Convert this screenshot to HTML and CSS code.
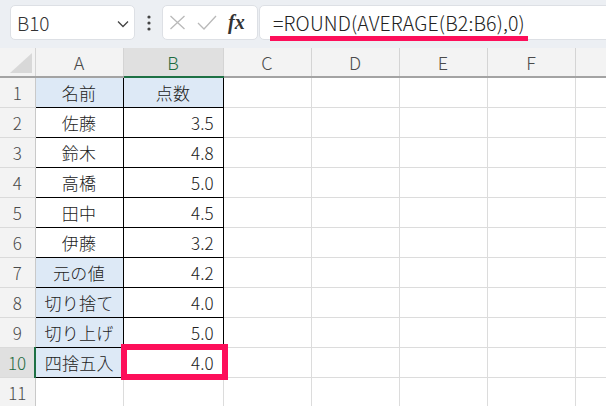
FILE: index.html
```html
<!DOCTYPE html>
<html lang="ja">
<head>
<meta charset="utf-8">
<title>ROUND</title>
<link rel="stylesheet" href="styles.css">
</head>
<body>
<div class="app">
  <div class="toolbar">
    <div class="namebox">
      <span class="name">B10</span>
      <svg class="chev" width="12" height="8" viewBox="0 0 12 8"><path d="M1 1.5 L6 6.5 L11 1.5" fill="none" stroke="#444" stroke-width="1.3"/></svg>
    </div>
    <div class="more">
      <svg width="4" height="16" viewBox="0 0 4 16"><circle cx="2" cy="2" r="1.6" fill="#444"/><circle cx="2" cy="8" r="1.6" fill="#444"/><circle cx="2" cy="14" r="1.6" fill="#444"/></svg>
    </div>
    <div class="fxbox">
      <svg class="ico" width="17" height="15" viewBox="0 0 17 15"><path d="M1.5 1 L15.5 14 M15.5 1 L1.5 14" fill="none" stroke="#b9b9b9" stroke-width="1.3"/></svg>
      <svg class="ico" width="20" height="15" viewBox="0 0 20 15"><path d="M1 8 L7 14 L19 1" fill="none" stroke="#b9b9b9" stroke-width="1.3"/></svg>
      <span class="fx">fx</span>
    </div>
    <div class="formula">
      <span class="ftext">=ROUND(AVERAGE(B2:B6),0)</span>
      <span class="mark"></span>
    </div>
  </div>
  <div class="sheet">
    <table class="grid">
      <colgroup>
        <col class="c-rh"><col class="c-a"><col class="c-b"><col class="c-n"><col class="c-n"><col class="c-n"><col class="c-n"><col class="c-g">
      </colgroup>
      <tr class="hdr">
        <th class="corner"><svg width="22" height="20" viewBox="0 0 22 20"><polygon points="22,0 22,20 0,20" fill="#d8d8d8"/></svg></th>
        <th class="col">A</th><th class="col sel">B</th><th class="col">C</th><th class="col">D</th><th class="col">E</th><th class="col">F</th><th class="col"></th>
      </tr>
      <tr><th class="row">1</th><td class="t blue ctr">名前</td><td class="t blue ctr">点数</td><td></td><td></td><td></td><td></td><td></td></tr>
      <tr><th class="row">2</th><td class="t ctr">佐藤</td><td class="t num">3.5</td><td></td><td></td><td></td><td></td><td></td></tr>
      <tr><th class="row">3</th><td class="t ctr">鈴木</td><td class="t num">4.8</td><td></td><td></td><td></td><td></td><td></td></tr>
      <tr><th class="row">4</th><td class="t ctr">高橋</td><td class="t num">5.0</td><td></td><td></td><td></td><td></td><td></td></tr>
      <tr><th class="row">5</th><td class="t ctr">田中</td><td class="t num">4.5</td><td></td><td></td><td></td><td></td><td></td></tr>
      <tr><th class="row">6</th><td class="t ctr">伊藤</td><td class="t num">3.2</td><td></td><td></td><td></td><td></td><td></td></tr>
      <tr><th class="row">7</th><td class="t blue ctr">元の値</td><td class="t num">4.2</td><td></td><td></td><td></td><td></td><td></td></tr>
      <tr><th class="row">8</th><td class="t blue ctr">切り捨て</td><td class="t num">4.0</td><td></td><td></td><td></td><td></td><td></td></tr>
      <tr><th class="row">9</th><td class="t blue ctr">切り上げ</td><td class="t num">5.0</td><td></td><td></td><td></td><td></td><td></td></tr>
      <tr><th class="row sel">10</th><td class="t blue ctr">四捨五入</td><td class="t num active">4.0<span class="box"></span></td><td></td><td></td><td></td><td></td><td></td></tr>
      <tr><th class="row">11</th><td></td><td></td><td></td><td></td><td></td><td></td><td></td></tr>
    </table>
  </div>
</div>
</body>
</html>
```

FILE: styles.css
```css
html, body {
  margin: 0;
  padding: 0;
  background: #ffffff;
}
body {
  font-family: "Noto Sans CJK JP", "Noto Sans", sans-serif;
  font-weight: 300;
  color: #222;
  width: 606px;
  height: 406px;
  overflow: hidden;
}
.app {
  width: 606px;
  height: 406px;
  overflow: hidden;
}
.toolbar {
  height: 48px;
  box-sizing: border-box;
  background: #eceff3;
  display: flex;
  align-items: flex-start;
  padding: 5px 0 0 10px;
}
.namebox, .fxbox, .formula {
  height: 35px;
  box-sizing: border-box;
  background: #fff;
  border: 1px solid #dde0e5;
  border-radius: 5px;
  display: flex;
  align-items: center;
}
.namebox {
  width: 125px;
  padding: 0 5px 0 6px;
  justify-content: space-between;
}
.name {
  font-size: 19px;
  color: #333;
}
.chev {
  margin-top: 2px;
}
.more {
  width: 27px;
  height: 35px;
  display: flex;
  align-items: center;
  justify-content: center;
}
.fxbox {
  width: 96px;
  padding: 0 0 0 6px;
}
.fxbox .ico:first-child {
  margin-right: 11px;
}
.fxbox .ico + .ico {
  margin-right: 11px;
}
.fx {
  font-family: "Liberation Serif", "DejaVu Serif", serif;
  font-style: italic;
  font-weight: bold;
  font-size: 20px;
  color: #333;
}
.formula {
  position: relative;
  flex: 1;
  margin-left: 1px;
  margin-right: -12px;
  padding-left: 13px;
}
.ftext {
  font-size: 19.5px;
  color: #222;
  letter-spacing: 0.15px;
}
.mark {
  position: absolute;
  left: 10px;
  width: 258px;
  top: 30px;
  height: 5px;
  background: #fd0f5a;
}
.sheet {
  height: 358px;
  overflow: hidden;
}
.grid {
  border-collapse: collapse;
  table-layout: fixed;
  width: 635px;
}
.c-rh { width: 35px; }
.c-a { width: 88px; }
.c-b { width: 100px; }
.c-n { width: 88px; }
.c-g { width: 60px; }
.grid th, .grid td {
  padding: 0;
  height: 29px;
  font-size: 17px;
  font-weight: 300;
  line-height: 20px;
}
.grid td {
  border-right: 1px solid #dcdcdc;
  border-bottom: 1px solid #dcdcdc;
}
.grid th {
  background: #f3f3f3;
  color: #4a4a4a;
  text-align: center;
}
.grid .hdr th {
  height: 28px;
  font-size: 18px;
}
.corner {
  border-right: 1px solid #d4d4d4;
  border-bottom: 2px solid #a3a3a3;
  vertical-align: bottom;
  text-align: right;
}
.corner svg {
  display: block;
  margin: 0 3px 3px auto;
}
.col {
  border-right: 1px solid #d4d4d4;
  border-bottom: 2px solid #a3a3a3;
}
.col.sel {
  background: #e0e0e0;
  color: #1e6b41;
  border-bottom: 2px solid #1e7145;
}
.row {
  border-right: 1px solid #c9c9c9;
  border-bottom: 1px solid #dadada;
}
.row.sel {
  background: #e0e0e0;
  color: #1e6b41;
  border-right: 2px solid #1e7145;
}
.grid td.t {
  border: 1px solid #000;
}
.blue {
  background: #dde9f6;
}
.ctr {
  text-align: center;
  letter-spacing: 0.3px;
}
.num {
  text-align: right;
  padding-right: 9px !important;
}
.active {
  position: relative;
}
.box {
  position: absolute;
  left: -3px;
  right: -5px;
  top: -4px;
  bottom: -3px;
  border: 6px solid #fd0f5a;
}
```
